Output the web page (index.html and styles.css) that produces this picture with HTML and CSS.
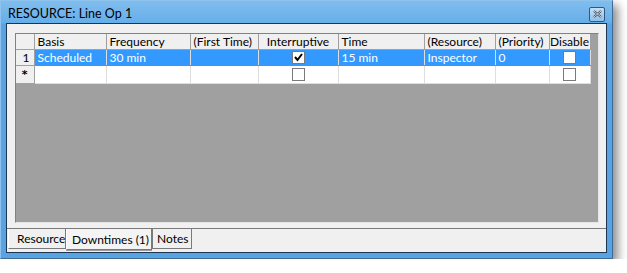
FILE: index.html
```html
<!DOCTYPE html>
<html>
<head>
<meta charset="utf-8">
<link rel="stylesheet" href="styles.css">
</head>
<body>
<div class="window">
  <div class="titlebar">
    <span class="title">RESOURCE: Line Op 1</span>
    <span class="close"><svg width="9" height="8" viewBox="0 0 9 8"><path d="M1 1 L8 7 M8 1 L1 7" stroke="#2b3a4c" stroke-width="2"/><path d="M1 1 L8 7 M8 1 L1 7" stroke="#ffffff" stroke-width="0.8"/></svg></span>
  </div>
  <div class="client">
    <div class="grid">
      <table>
        <colgroup>
          <col class="c-rh"><col class="c-basis"><col class="c-freq"><col class="c-first"><col class="c-int"><col class="c-time"><col class="c-res"><col class="c-pri"><col class="c-dis">
        </colgroup>
        <tr class="hdr">
          <th></th><th>Basis</th><th>Frequency</th><th>(First Time)</th><th class="ctr">Interruptive</th><th>Time</th><th>(Resource)</th><th>(Priority)</th><th class="ctr">Disable</th>
        </tr>
        <tr class="sel">
          <td class="rh">1</td><td>Scheduled</td><td>30 min</td><td></td><td class="ctr"><span class="cb checked"><svg width="11" height="11" viewBox="0 0 11 11"><path d="M2 5 L4.5 8 L9 2" fill="none" stroke="#000" stroke-width="2"/></svg></span></td><td>15 min</td><td>Inspector</td><td>0</td><td class="ctr"><span class="cb"></span></td>
        </tr>
        <tr class="new">
          <td class="rh star">*</td><td></td><td></td><td></td><td class="ctr"><span class="cb"></span></td><td></td><td></td><td></td><td class="ctr"><span class="cb"></span></td>
        </tr>
      </table>
    </div>
    <div class="tabs">
      <span class="tab t1">Resource</span>
      <span class="tab t2 active">Downtimes (1)</span>
      <span class="tab t3">Notes</span>
    </div>
  </div>
</div>
</body>
</html>
```
FILE: styles.css
```css
html, body {
  margin: 0;
  padding: 0;
  background: #ffffff;
}
body {
  font-family: Lato, "Noto Sans", sans-serif;
  font-size: 12px;
}
.window {
  box-sizing: border-box;
  width: 613px;
  height: 259px;
  border: 1px solid #3f6b96;
  border-top-color: #8ec3ee;
  border-left-color: #8ec3ee;
  background: linear-gradient(to bottom, #80bdef 0px, #66aee8 22px, #5aa3e2 23px, #5aa3e2 100%);
  padding: 0 5px 5px 5px;
  display: flex;
  flex-direction: column;
  box-shadow: 5px 5px 9px rgba(0, 0, 0, 0.45);
}
.titlebar {
  height: 22px;
  flex: none;
  display: flex;
  align-items: center;
  justify-content: space-between;
  padding: 0 2px 0 2px;
}
.title {
  color: #000;
  font-size: 12.5px;
  padding-top: 2px;
}
.close {
  box-sizing: border-box;
  width: 16px;
  height: 15px;
  border: 1px solid #33587c;
  border-radius: 2px;
  background: linear-gradient(to bottom, #c4dff5, #8fc0ea);
  display: flex;
  align-items: center;
  justify-content: center;
  margin-top: 4px;
}
.client {
  flex: 1;
  min-height: 0;
  border: 1px solid #1c3550;
  background: #f0f0f0;
  display: flex;
  flex-direction: column;
}
.grid {
  flex: none;
  margin: 9px 7px 0 8px;
  height: 190px;
  box-sizing: border-box;
  border: 1px solid #828282;
  border-right-color: #e6e6e6;
  border-bottom-color: #e6e6e6;
  background: #a0a0a0;
}
table {
  border-collapse: collapse;
  table-layout: fixed;
  width: 574px;
}
.c-rh { width: 18px; }
.c-basis { width: 72px; }
.c-freq { width: 84px; }
.c-first { width: 68px; }
.c-int { width: 80px; }
.c-time { width: 86px; }
.c-res { width: 71px; }
.c-pri { width: 54px; }
.c-dis { width: 41px; }
th, td {
  height: 15px;
  padding: 0 0 0 3px;
  font-weight: normal;
  text-align: left;
  white-space: nowrap;
  overflow: hidden;
  line-height: 15px;
  font-size: 12px;
}
th {
  background: #f0f0f0;
  border-right: 1px solid #a0a0a0;
  border-bottom: 1px solid #a0a0a0;
  color: #000;
}
td {
  background: #fff;
  border-right: 1px solid #dedede;
  border-bottom: 1px solid #dedede;
}
td.rh {
  background: #f0f0f0;
  border-right: 1px solid #a0a0a0;
  border-bottom: 1px solid #a0a0a0;
  text-align: right;
  padding: 0 4px 0 0;
}
td.star {
  text-align: center;
  padding: 0;
  font-family: "DejaVu Sans", sans-serif;
  font-weight: bold;
  font-size: 11px;
  line-height: 17px;
}
tr.sel td {
  background: #3399ff;
  color: #fff;
  border-bottom-color: #3399ff;
  border-right-color: #dedede;
}
tr.sel td.rh {
  background: #f0f0f0;
  color: #000;
  border-bottom-color: #a0a0a0;
  border-right-color: #a0a0a0;
}
.ctr {
  text-align: center;
  padding: 0;
}
.cb {
  display: inline-block;
  box-sizing: border-box;
  width: 13px;
  height: 13px;
  border: 1px solid #7a7a7a;
  background: #fff;
  vertical-align: middle;
  margin-top: -2px;
  position: relative;
}
.cb svg {
  position: absolute;
  left: 0;
  top: 0;
}
.tabs {
  flex: none;
  margin-top: 5px;
  border-top: 1px solid #7a7a7a;
  display: flex;
  padding-left: 1px;
  align-items: flex-start;
}
.tab {
  flex: none;
  box-sizing: border-box;
  height: 20px;
  line-height: 20px;
  padding: 0 4px;
  white-space: nowrap;
  background: #f0f0f0;
  border: 1px solid #9a9a9a;
  border-top: none;
  border-right-color: #7a7a7a;
  border-bottom-color: #7a7a7a;
  color: #000;
}
.t1 { width: 58px; padding-left: 8px; border-left-color: #ffffff; }
.t2 {
  width: 86px;
  height: 21px;
  line-height: 22px;
  padding-left: 5px;
  padding-right: 0;
  border-left: 1px solid #ffffff;
  box-shadow: 0 1px 0 #9a9a9a;
  background: #f4f4f4;
}
.t3 { width: 40px; padding-left: 4px; border-left-color: #7a7a7a; }
```
